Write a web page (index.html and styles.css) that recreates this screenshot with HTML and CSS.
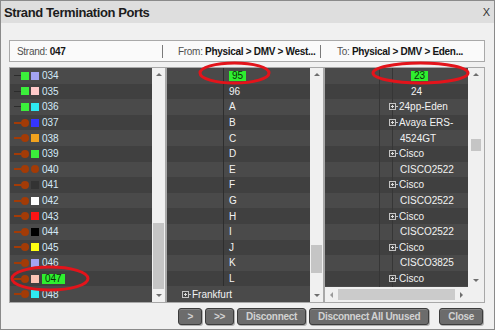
FILE: index.html
```html
<!DOCTYPE html>
<html lang="en">
<head>
  <meta charset="UTF-8">
  <title>Strand Termination Ports</title>
  <link rel="stylesheet" href="styles.css">
</head>
<body>
  <div class="dialog">
    <div class="titlebar">
      <span class="title">Strand Termination Ports</span>
      <span class="close-x">X</span>
    </div>

    <div class="content">
      <div class="header">
        <div class="hcell strand">Strand: <b>047</b></div>
        <span class="sep"></span>
        <div class="hcell from">From: <b>Physical &gt; DMV &gt; West...</b></div>
        <span class="sep"></span>
        <div class="hcell to">To: <b>Physical &gt; DMV &gt; Eden...</b></div>
      </div>

      <div class="panels">
        <!-- strands -->
        <div class="panel">
          <div class="list strands">
            <div class="row"><span class="wire"></span><span class="sq c-green"></span><span class="sq c-lavender"></span><span class="num">034</span></div>
            <div class="row"><span class="wire"></span><span class="sq c-green"></span><span class="sq c-pink"></span><span class="num">035</span></div>
            <div class="row"><span class="wire"></span><span class="sq c-green"></span><span class="sq c-cyan"></span><span class="num">036</span></div>
            <div class="row"><span class="wire brown"></span><span class="plug"></span><span class="sq c-blue"></span><span class="num">037</span></div>
            <div class="row"><span class="wire brown"></span><span class="plug"></span><span class="sq c-orange"></span><span class="num">038</span></div>
            <div class="row"><span class="wire brown"></span><span class="plug"></span><span class="sq c-green"></span><span class="num">039</span></div>
            <div class="row"><span class="wire brown"></span><span class="plug"></span><span class="sq c-brown"></span><span class="num">040</span></div>
            <div class="row"><span class="wire brown"></span><span class="plug"></span><span class="sq c-slate"></span><span class="num">041</span></div>
            <div class="row"><span class="wire brown"></span><span class="plug"></span><span class="sq c-white"></span><span class="num">042</span></div>
            <div class="row"><span class="wire brown"></span><span class="plug"></span><span class="sq c-red"></span><span class="num">043</span></div>
            <div class="row"><span class="wire brown"></span><span class="plug"></span><span class="sq c-black"></span><span class="num">044</span></div>
            <div class="row"><span class="wire brown"></span><span class="plug"></span><span class="sq c-yellow"></span><span class="num">045</span></div>
            <div class="row"><span class="wire brown"></span><span class="plug"></span><span class="sq c-lavender"></span><span class="num">046</span></div>
            <div class="row"><span class="wire brown"></span><span class="plug"></span><span class="sq c-salmon"></span><span class="num"><span class="hit">047</span></span></div>
            <div class="row"><span class="wire brown"></span><span class="plug"></span><span class="sq c-cyan"></span><span class="num">048</span></div>
          </div>
          <div class="vscroll">
            <span class="arrow up"></span>
            <div class="track"><div class="thumb thumb-left"></div></div>
            <span class="arrow down"></span>
          </div>
        </div>

        <!-- from ports -->
        <div class="panel">
          <div class="list">
            <div class="branch">
              <div class="row"><span class="hit">95</span></div>
              <div class="row">96</div>
              <div class="row">A</div>
              <div class="row">B</div>
              <div class="row">C</div>
              <div class="row">D</div>
              <div class="row">E</div>
              <div class="row">F</div>
              <div class="row">G</div>
              <div class="row">H</div>
              <div class="row">I</div>
              <div class="row">J</div>
              <div class="row">K</div>
              <div class="row">L</div>
            </div>
            <div class="row node top"><span class="exp"></span><span class="tick"></span>Frankfurt</div>
          </div>
          <div class="vscroll">
            <span class="arrow up"></span>
            <div class="track"><div class="thumb thumb-mid"></div></div>
            <span class="arrow down"></span>
          </div>
        </div>

        <!-- to ports -->
        <div class="panel stacked">
          <div class="panel-main">
            <div class="list">
              <div class="lvl1">
                <div class="lvl2">
                  <div class="row leaf"><span class="hit">23</span></div>
                  <div class="row leaf">24</div>
                  <div class="row node"><span class="exp"></span><span class="tick"></span>24pp-Eden</div>
                  <div class="row node"><span class="exp"></span><span class="tick"></span>Avaya ERS-</div>
                  <div class="row cont">4524GT</div>
                  <div class="row node"><span class="exp"></span><span class="tick"></span>Cisco</div>
                  <div class="row cont">CISCO2522</div>
                  <div class="row node"><span class="exp"></span><span class="tick"></span>Cisco</div>
                  <div class="row cont">CISCO2522</div>
                  <div class="row node"><span class="exp"></span><span class="tick"></span>Cisco</div>
                  <div class="row cont">CISCO2522</div>
                  <div class="row node"><span class="exp"></span><span class="tick"></span>Cisco</div>
                  <div class="row cont">CISCO3825</div>
                  <div class="row node"><span class="exp"></span><span class="tick"></span>Cisco</div>
                </div>
              </div>
            </div>
            <div class="vscroll wide">
              <span class="arrow up"></span>
              <div class="track"><div class="thumb thumb-right"></div></div>
              <span class="arrow down"></span>
            </div>
          </div>
          <div class="hscroll">
            <div class="hbar">
              <span class="harrow left"></span>
              <div class="hthumb"></div>
              <span class="harrow right"></span>
            </div>
            <div class="corner"></div>
          </div>
        </div>
      </div>

      <div class="buttons">
        <button class="btn">&gt;</button>
        <button class="btn">&gt;&gt;</button>
        <button class="btn">Disconnect</button>
        <button class="btn">Disconnect All Unused</button>
        <button class="btn close">Close</button>
      </div>
    </div>
  </div>

  <!-- red markup circles drawn over the dialog -->
  <svg class="marks" width="495" height="330" viewBox="0 0 495 330">
    <ellipse cx="50" cy="278.5" rx="38" ry="11.5"/>
    <ellipse cx="234.5" cy="73" rx="34.5" ry="10"/>
    <ellipse cx="420.5" cy="73" rx="47.5" ry="10"/>
  </svg>
</body>
</html>
```

FILE: styles.css
```css
* {
  box-sizing: border-box;
}
body {
  margin: 0;
  position: relative;
  font-family: "Liberation Sans", Arial, sans-serif;
  font-size: 10px;
  background: #fff;
}
.dialog {
  width: 495px;
  height: 330px;
  border: 1px solid #8a8a8a;
  background: #f0f0f0;
  display: flex;
  flex-direction: column;
}
.titlebar {
  height: 22px;
  flex: none;
  background: #dedede;
  display: flex;
  align-items: center;
  justify-content: space-between;
  padding: 0 4px 0 3px;
}
.title {
  font-size: 13px;
  font-weight: bold;
  color: #1c1c1c;
  letter-spacing: -0.4px;
}
.close-x {
  font-size: 11px;
  color: #333;
}
.content {
  flex: 1;
  padding: 17px 9px 0 8px;
  display: flex;
  flex-direction: column;
}

/* header strip */
.header {
  height: 22px;
  flex: none;
  border: 1px solid #a9a9a9;
  background: #fafafa;
  display: flex;
  align-items: center;
  color: #505050;
  letter-spacing: -0.3px;
  white-space: nowrap;
}
.hcell {
  overflow: hidden;
}
.hcell b {
  color: #151515;
}
.strand { width: 152px; padding-left: 7px; }
.from { width: 157px; padding-left: 15px; }
.to { flex: 1; padding-left: 16px; }
.sep {
  width: 1px;
  height: 13px;
  background: #7a7a7a;
}

/* panels */
.panels {
  margin-top: 5px;
  height: 236px;
  flex: none;
  display: grid;
  grid-template-columns: 157px 158px 1fr;
}
.panel {
  border: 1px solid #a8a8a8;
  display: flex;
  overflow: hidden;
}
.panel.stacked {
  flex-direction: column;
}
.panel-main {
  flex: 1;
  display: flex;
  min-height: 0;
}
.list {
  flex: 1;
  overflow: hidden;
  color: #f2f2f2;
  background: repeating-linear-gradient(#4a4a4a 0 15.6px, #404040 15.6px 31.2px);
}
.row {
  height: 15.6px;
  display: flex;
  align-items: center;
  white-space: nowrap;
}
.hit {
  display: inline-block;
  background: #2fef2f;
  color: #0a300a;
  line-height: 10px;
  padding: 0 3px;
}

/* strand rows */
.strands .row {
  padding-left: 4px;
}
.wire {
  width: 7px;
  height: 1px;
  flex: none;
  background: #2c2c2c;
}
.wire.brown {
  height: 2px;
  background: #a33b06;
}
.plug {
  width: 8px;
  height: 8px;
  flex: none;
  border-radius: 50%;
  background: #a33b06;
}
.sq {
  width: 8px;
  height: 8px;
  flex: none;
}
.sq + .sq,
.plug + .sq {
  margin-left: 2px;
}
.num {
  margin-left: 3px;
  color: #d4e9f7;
}
.c-green { background: #3bef3b; }
.c-lavender { background: #a3a3f2; }
.c-pink { background: #ffcaca; }
.c-cyan { background: #2ee9f2; }
.c-blue { background: #3535ff; }
.c-orange { background: #f3a21e; }
.c-brown { background: #a33b06; border-radius: 50%; }
.c-slate { background: #333; }
.c-white { background: #fff; }
.c-red { background: #ff1414; }
.c-black { background: #000; }
.c-yellow { background: #ffff12; }
.c-salmon { background: #fbc4b4; }

/* port trees */
.branch {
  margin-left: 56px;
  border-left: 1px solid #2e2e2e;
}
.branch .row {
  padding-left: 5px;
}
.row.top {
  padding-left: 15px;
}
.exp {
  width: 7px;
  height: 7px;
  flex: none;
  border: 1px solid #c4c4c4;
  background:
    linear-gradient(#dcdcdc, #dcdcdc) center / 3px 1px no-repeat,
    linear-gradient(#dcdcdc, #dcdcdc) center / 1px 3px no-repeat,
    #454545;
}
.tick {
  width: 2px;
  height: 1px;
  flex: none;
  margin-right: 1px;
  background: #c4c4c4;
}
.lvl1 {
  height: 100%;
  margin-left: 54px;
  border-left: 1px solid #363636;
}
.lvl2 {
  height: 100%;
  margin-left: 12px;
  border-left: 1px solid #363636;
}
.lvl2 .leaf { padding-left: 18px; }
.lvl2 .node { margin-left: -4px; }
.lvl2 .cont { padding-left: 7px; }

/* scrollbars */
.vscroll {
  width: 13px;
  flex: none;
  background: #f0f0f0;
  display: flex;
  flex-direction: column;
}
.vscroll.wide {
  width: 16px;
}
.track {
  flex: 1;
}
.thumb {
  margin: 0 1px;
  background: #c5c5c5;
}
.thumb-left { margin-top: 142px; height: 66px; }
.thumb-mid { margin-top: 164px; height: 28px; }
.thumb-right { margin: 58px 3px 0; height: 12px; }
.arrow {
  height: 13px;
  flex: none;
  display: flex;
  align-items: center;
  justify-content: center;
}
.arrow::before {
  content: "";
  border-left: 3px solid transparent;
  border-right: 3px solid transparent;
}
.arrow.up::before { border-bottom: 3px solid #6e6e6e; }
.arrow.down::before { border-top: 3px solid #6e6e6e; }
.hscroll {
  height: 15px;
  flex: none;
  display: flex;
  background: #f0f0f0;
}
.hbar {
  flex: 1;
  display: flex;
  align-items: center;
}
.hthumb {
  flex: 1;
  height: 11px;
  background: #cbcbcb;
}
.harrow {
  width: 13px;
  height: 100%;
  display: flex;
  align-items: center;
  justify-content: center;
}
.harrow::before {
  content: "";
  border-top: 3px solid transparent;
  border-bottom: 3px solid transparent;
}
.harrow.left::before { border-right: 3px solid #9a9a9a; }
.harrow.right::before { border-left: 3px solid #6e6e6e; }
.corner {
  width: 16px;
}

/* buttons */
.buttons {
  margin-top: 5px;
  padding-right: 2px;
  display: flex;
  justify-content: flex-end;
  gap: 3px;
}
.btn {
  height: 17px;
  padding: 0 8px;
  font-family: "Liberation Sans", Arial, sans-serif;
  font-size: 10px;
  font-weight: bold;
  letter-spacing: -0.3px;
  color: #d2d2d2;
  background: #6c6c6c;
  border: 1px solid #3c3c3c;
  border-radius: 3px;
  box-shadow: inset 0 1px 0 #858585, 1px 1px 0 #b0b0b0;
}
.btn.close {
  margin-left: 7px;
}

/* annotation overlay */
.marks {
  position: absolute;
  top: 0;
  left: 0;
  pointer-events: none;
}
.marks ellipse {
  fill: none;
  stroke: #e3141b;
  stroke-width: 3;
}
```
